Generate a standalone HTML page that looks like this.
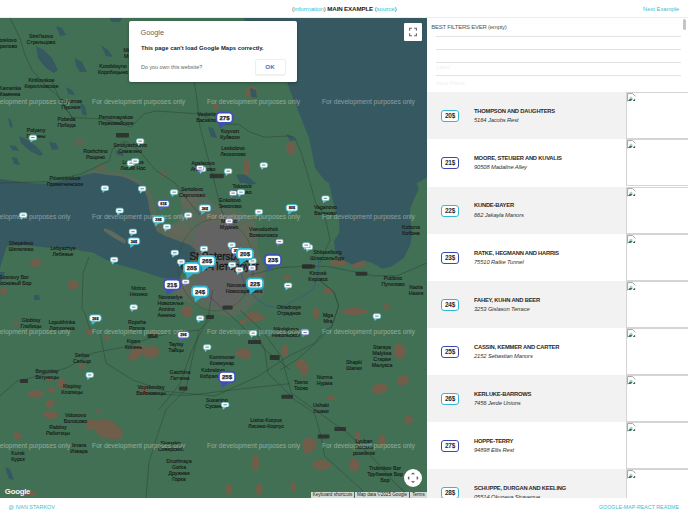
<!DOCTYPE html>
<html><head><meta charset="utf-8"><style>
*{box-sizing:border-box}
html,body{margin:0;padding:0}
body{width:688px;height:512px;overflow:hidden;background:#fff;font-family:"Liberation Sans",sans-serif;position:relative}
.hdr{position:absolute;left:0;top:0;width:688px;height:18px;border-bottom:1px solid #ececec;background:#fff}
.hc{position:absolute;left:292px;top:4.6px;font-size:6.2px;letter-spacing:-0.08px;line-height:8px;white-space:nowrap;color:#333}
.hc b{font-weight:bold;color:#222;letter-spacing:-0.15px}
.lk{color:#2cbfd4}
.par{color:#555}
.nx{position:absolute;left:643px;top:5px;font-size:5.8px;line-height:8px;color:#3bbdd3}
.map{position:absolute;left:0;top:18px;width:427px;height:480px;overflow:hidden;background:#427054}
.map svg{position:absolute;left:0;top:0}
.lb{font-size:5.2px;fill:#161a18;text-anchor:middle;stroke:#161a18;stroke-width:0.12px}
.city{font-size:10px;fill:#1a1a1a;text-anchor:middle;stroke:#1a1a1a;stroke-width:0.35px}
.wm{font-size:6.65px;fill:#ffffff;opacity:0.4}
.mk{font-weight:bold;fill:#222;text-anchor:middle;stroke:#222;stroke-width:0.25px}
.dlg{position:absolute;left:129px;top:2.5px;width:168px;height:61.5px;background:#fff;border-radius:2px;box-shadow:0 1px 3px rgba(0,0,0,.3)}
.dg1{position:absolute;left:11.5px;top:7.3px;font-size:7.3px;color:#5f5f5f}
.dg2{position:absolute;left:12px;top:24.8px;font-size:5.9px;font-weight:bold;color:#222;white-space:nowrap}
.dg3{position:absolute;left:12px;top:43.8px;font-size:5.4px;color:#666;white-space:nowrap}
.ok{position:absolute;left:125.5px;top:38.5px;width:31px;height:16px;border:1px solid #efefef;border-radius:2px;box-shadow:0 0.5px 1px rgba(0,0,0,.06);font-size:6.2px;font-weight:bold;color:#4275c0;text-align:center;line-height:14px}
.fs{position:absolute;left:404px;top:5px;width:18px;height:18px;background:#fff;border-radius:1px}
.glogo{position:absolute;left:4.8px;top:468.9px;font-size:7.9px;font-weight:bold;color:#fff;letter-spacing:-0.3px;text-shadow:0 0 0.6px rgba(0,0,0,.5)}
.attr{position:absolute;top:473.5px;height:6.5px;background:rgba(245,245,245,.8);font-size:4.6px;line-height:6.5px;color:#222;white-space:nowrap;text-align:center}
.cam{position:absolute;left:404px;top:451px;width:18px;height:18px;border-radius:50%;background:#fff}
.pnl{position:absolute;left:427px;top:18px;width:261px;height:480px;overflow:hidden;background:#fff}
.fh{position:absolute;left:4.3px;top:6.2px;font-size:6px;letter-spacing:-0.25px;color:#555;white-space:nowrap}
.ln{position:absolute;left:9px;width:245px;height:1px;background:#e3e3e3}
.ph{position:absolute;left:9px;font-size:5.5px;color:#f0f0f0}
.sb{position:absolute;left:256px;top:1px;width:3px;height:10.5px;border-radius:2px;background:#c4c4c4}
.row{position:absolute;left:0;width:261px;height:47px}
.row.g{background:#f2f2f2}
.row.w{background:#fff}
.badge{position:absolute;left:14px;top:18px;width:18px;height:12px;border:1.8px solid;border-radius:3px;background:#fff;font-size:6.4px;font-weight:bold;color:#2a2a2a;text-align:center;line-height:10.2px;letter-spacing:-0.25px}
.bc{border-color:#33b8d0}
.bi{border-color:#3b4aa8}
.ttl{position:absolute;left:47px;top:15.9px;font-size:5.8px;letter-spacing:-0.22px;font-weight:bold;color:#2a2a2a;white-space:nowrap}
.adr{position:absolute;left:47px;top:25px;font-size:5.8px;font-style:italic;color:#333;letter-spacing:-0.12px;white-space:nowrap}
.img{position:absolute;left:198.6px;top:0px;width:70px;height:47px;border:1px solid #d4d4d4;background:#fff}
.bi1{position:absolute;left:0px;top:0px}
.ftl{position:absolute;left:8.5px;top:503.5px;font-size:5.45px;color:#3bbdd3;white-space:nowrap}
.ftr{position:absolute;left:599px;top:503.5px;font-size:5.3px;color:#3bbdd3;white-space:nowrap}
</style></head><body>
<div class="hdr"><div class="hc"><span class="par">(</span><span class="lk">information</span><span class="par">)</span> <b>MAIN EXAMPLE</b> <span class="par">(</span><span class="lk">source</span><span class="par">)</span></div><div class="nx">Next Example</div></div>
<div class="map">
<svg width="427" height="480" viewBox="0 0 427 480">
<rect x="0" y="0" width="427" height="480" fill="#427054"/>
<path d="M158.5,331.0Q160.4,332.4 159.3,334.5Q158.3,336.5 156.4,338.7Q154.6,340.8 151.5,340.1Q148.5,339.3 145.6,338.6Q142.7,338.0 142.6,335.7Q142.6,333.3 144.7,331.7Q146.9,330.1 149.4,328.6Q152.0,327.0 154.3,328.3Q156.7,329.6 158.5,331.0Z" fill="#705e4b"/>
<path d="M145.0,327.7Q146.3,329.6 145.3,331.9Q144.4,334.3 142.5,336.3Q140.7,338.3 137.8,340.2Q134.9,342.0 131.3,342.6Q127.7,343.1 128.2,340.5Q128.8,337.8 129.7,335.7Q130.6,333.5 133.1,331.0Q135.6,328.6 139.6,327.2Q143.6,325.8 145.0,327.7Z" fill="#705e4b"/>
<path d="M250.1,333.3Q251.4,335.0 250.2,336.8Q248.9,338.7 246.9,340.5Q244.8,342.3 242.4,340.6Q240.0,339.0 237.1,338.2Q234.2,337.4 235.3,335.3Q236.3,333.2 238.0,331.9Q239.8,330.7 242.0,330.5Q244.2,330.2 246.5,330.9Q248.7,331.5 250.1,333.3Z" fill="#705e4b"/>
<path d="M246.7,302.7Q247.7,303.5 246.7,304.3Q245.7,305.1 244.8,305.8Q243.8,306.6 242.4,306.4Q241.0,306.3 240.3,305.4Q239.6,304.5 239.4,303.5Q239.2,302.5 240.4,302.0Q241.5,301.5 242.6,301.3Q243.6,301.2 244.7,301.5Q245.7,301.9 246.7,302.7Z" fill="#705e4b"/>
<path d="M263.7,297.6Q265.8,299.0 264.0,300.6Q262.3,302.2 259.3,302.9Q256.4,303.6 253.0,303.6Q249.5,303.6 247.5,302.2Q245.5,300.7 245.9,299.1Q246.2,297.4 247.6,295.7Q249.0,293.9 252.9,293.7Q256.7,293.5 259.1,294.8Q261.6,296.1 263.7,297.6Z" fill="#705e4b"/>
<path d="M192.7,290.8Q193.2,293.0 192.4,294.9Q191.6,296.9 189.9,298.4Q188.2,300.0 186.0,299.4Q183.7,298.8 182.8,296.8Q182.0,294.8 181.0,292.7Q180.1,290.5 182.3,289.6Q184.6,288.8 186.3,288.1Q188.0,287.3 190.1,288.0Q192.2,288.7 192.7,290.8Z" fill="#705e4b"/>
<path d="M147.7,370.6Q147.7,372.8 147.6,374.7Q147.4,376.6 146.2,377.0Q145.0,377.4 143.7,377.9Q142.4,378.4 141.4,376.7Q140.4,375.1 140.6,372.8Q140.8,370.6 141.5,368.6Q142.2,366.6 143.7,367.0Q145.1,367.3 146.4,367.9Q147.7,368.5 147.7,370.6Z" fill="#705e4b"/>
<path d="M43.3,374.3Q44.0,375.8 43.1,377.1Q42.1,378.5 39.7,379.1Q37.3,379.7 34.4,379.8Q31.5,379.8 29.4,378.6Q27.2,377.4 28.0,375.9Q28.9,374.4 30.4,373.2Q31.8,372.0 34.4,372.3Q37.1,372.6 39.8,372.7Q42.5,372.9 43.3,374.3Z" fill="#705e4b"/>
<path d="M54.6,370.7Q55.6,371.5 55.3,372.7Q55.0,373.9 53.4,374.4Q51.7,374.9 50.3,374.4Q48.9,373.8 47.9,373.1Q46.9,372.5 46.7,371.4Q46.4,370.4 47.8,370.0Q49.2,369.5 50.4,369.1Q51.6,368.6 52.6,369.2Q53.7,369.9 54.6,370.7Z" fill="#705e4b"/>
<path d="M54.4,383.1Q54.6,384.4 54.1,385.4Q53.7,386.4 52.9,387.6Q52.1,388.8 50.9,388.0Q49.7,387.2 48.8,386.4Q48.0,385.5 47.9,384.3Q47.7,383.1 48.3,381.7Q48.9,380.3 50.4,380.8Q51.9,381.2 53.1,381.5Q54.3,381.9 54.4,383.1Z" fill="#705e4b"/>
<path d="M64.5,362.0Q65.7,363.6 66.4,365.4Q67.2,367.3 66.2,368.9Q65.2,370.6 63.5,371.2Q61.7,371.9 60.3,370.6Q58.9,369.3 57.9,368.0Q57.0,366.7 57.3,365.1Q57.5,363.5 58.4,361.9Q59.3,360.3 61.3,360.3Q63.3,360.3 64.5,362.0Z" fill="#705e4b"/>
<path d="M57.0,395.7Q57.4,397.0 56.7,398.2Q56.0,399.3 54.1,400.0Q52.2,400.7 49.9,400.4Q47.6,400.2 45.7,399.3Q43.8,398.5 43.6,397.0Q43.5,395.5 45.5,394.6Q47.6,393.7 49.8,393.8Q52.0,393.8 54.3,394.1Q56.7,394.4 57.0,395.7Z" fill="#705e4b"/>
<path d="M92.3,314.0Q92.3,315.0 92.1,315.9Q91.9,316.7 91.0,317.4Q90.1,318.1 89.0,317.8Q87.9,317.4 87.3,316.7Q86.7,315.9 86.6,315.0Q86.5,314.1 87.2,313.3Q87.9,312.6 88.9,312.8Q89.9,313.0 91.1,313.0Q92.2,313.0 92.3,314.0Z" fill="#705e4b"/>
<path d="M109.2,318.2Q109.9,319.0 109.6,320.1Q109.3,321.3 108.3,321.8Q107.4,322.4 106.5,321.9Q105.6,321.5 105.0,320.7Q104.4,320.0 104.6,319.1Q104.8,318.2 105.1,317.2Q105.4,316.2 106.3,316.5Q107.2,316.7 107.8,317.1Q108.5,317.5 109.2,318.2Z" fill="#705e4b"/>
<path d="M84.3,347.8Q84.8,348.5 84.4,349.3Q84.0,350.1 83.0,350.7Q82.1,351.2 81.1,350.9Q80.0,350.5 79.4,349.9Q78.8,349.3 78.6,348.5Q78.5,347.6 79.2,347.0Q79.9,346.4 81.0,346.1Q82.1,345.7 82.9,346.4Q83.8,347.0 84.3,347.8Z" fill="#705e4b"/>
<path d="M52.6,360.6Q53.0,361.5 52.4,362.2Q51.8,362.9 50.6,363.1Q49.5,363.2 48.5,363.2Q47.5,363.1 46.8,362.7Q46.0,362.2 46.0,361.5Q46.0,360.8 46.8,360.4Q47.6,360.0 48.6,359.5Q49.7,359.0 51.0,359.4Q52.2,359.8 52.6,360.6Z" fill="#705e4b"/>
<path d="M99.2,393.0Q99.6,393.5 99.4,394.2Q99.1,394.9 98.5,395.0Q97.8,395.2 97.2,395.1Q96.6,395.0 96.1,394.6Q95.6,394.2 95.7,393.5Q95.7,392.9 96.0,392.1Q96.3,391.4 97.0,391.5Q97.8,391.7 98.3,392.1Q98.8,392.4 99.2,393.0Z" fill="#705e4b"/>
<path d="M122.5,414.5Q124.0,418.5 119.9,420.2Q115.8,421.9 111.1,421.0Q106.5,420.0 101.8,418.7Q97.1,417.3 96.6,414.1Q96.0,410.9 95.4,407.7Q94.8,404.5 98.2,402.2Q101.7,400.0 107.6,401.7Q113.5,403.4 117.2,407.0Q120.9,410.5 122.5,414.5Z" fill="#705e4b"/>
<path d="M21.8,416.4Q21.8,418.0 21.4,419.3Q21.1,420.6 19.8,421.1Q18.6,421.5 17.1,421.9Q15.6,422.2 14.8,420.8Q13.9,419.5 13.7,417.9Q13.4,416.3 14.7,415.5Q16.0,414.6 17.3,414.5Q18.6,414.4 20.2,414.6Q21.8,414.8 21.8,416.4Z" fill="#705e4b"/>
<path d="M405.1,329.9Q407.0,332.0 406.0,335.2Q405.0,338.4 402.9,340.1Q400.8,341.7 398.4,341.1Q396.1,340.5 394.6,337.9Q393.2,335.3 393.9,332.4Q394.6,329.5 395.6,327.0Q396.5,324.5 398.5,324.4Q400.5,324.2 401.8,326.0Q403.1,327.8 405.1,329.9Z" fill="#705e4b"/>
<path d="M409.0,360.7Q408.4,362.6 408.2,364.0Q407.9,365.4 406.2,366.2Q404.5,366.9 402.2,367.1Q400.0,367.3 398.1,366.0Q396.1,364.7 396.9,362.8Q397.6,360.9 398.6,359.2Q399.6,357.4 402.2,357.0Q404.9,356.6 407.2,357.6Q409.5,358.7 409.0,360.7Z" fill="#705e4b"/>
<path d="M387.2,367.7Q388.5,369.2 387.7,371.0Q386.8,372.9 384.7,374.3Q382.6,375.7 379.9,376.1Q377.2,376.5 375.1,375.8Q373.1,375.0 371.8,373.5Q370.4,372.0 371.8,369.7Q373.1,367.4 376.6,366.1Q380.2,364.8 383.1,365.5Q386.0,366.2 387.2,367.7Z" fill="#705e4b"/>
<path d="M412.7,400.4Q413.6,401.6 413.2,403.2Q412.7,404.7 411.2,404.9Q409.6,405.0 408.1,405.3Q406.7,405.6 405.4,404.5Q404.2,403.4 404.3,401.6Q404.4,399.9 405.5,398.7Q406.6,397.4 408.2,397.4Q409.7,397.4 410.7,398.4Q411.8,399.3 412.7,400.4Z" fill="#705e4b"/>
<path d="M250.3,334.6Q251.4,336.0 250.4,337.5Q249.5,339.0 248.4,340.4Q247.4,341.8 245.6,341.6Q243.9,341.5 243.3,339.6Q242.7,337.7 242.7,336.0Q242.7,334.3 243.3,332.5Q243.9,330.6 245.6,330.5Q247.3,330.4 248.3,331.8Q249.3,333.2 250.3,334.6Z" fill="#705e4b"/>
<path d="M308.8,349.1Q309.1,351.0 308.5,352.7Q308.0,354.4 306.8,356.5Q305.7,358.6 303.5,358.0Q301.3,357.4 300.7,355.1Q300.2,352.8 299.3,350.6Q298.5,348.5 299.8,346.3Q301.1,344.2 303.3,344.2Q305.5,344.2 307.0,345.7Q308.4,347.2 308.8,349.1Z" fill="#705e4b"/>
<path d="M316.5,424.8Q316.9,428.0 315.5,430.3Q314.1,432.5 312.3,433.5Q310.5,434.4 307.8,435.8Q305.0,437.1 303.6,434.1Q302.2,431.1 302.4,428.1Q302.6,425.0 303.8,422.0Q305.1,419.0 307.9,419.4Q310.7,419.8 313.4,420.7Q316.1,421.5 316.5,424.8Z" fill="#705e4b"/>
<path d="M330.1,445.5Q332.7,447.2 330.2,449.0Q327.7,450.7 325.2,451.8Q322.7,452.8 319.7,452.5Q316.7,452.2 314.9,450.7Q313.1,449.1 312.3,447.0Q311.5,444.9 314.2,443.6Q316.8,442.3 319.8,441.7Q322.9,441.1 325.1,442.5Q327.4,443.8 330.1,445.5Z" fill="#705e4b"/>
<path d="M259.3,442.0Q260.1,444.8 259.2,447.3Q258.3,449.8 257.4,451.4Q256.4,453.0 255.1,452.7Q253.9,452.4 252.8,450.3Q251.7,448.2 252.1,445.1Q252.5,442.0 253.0,438.9Q253.6,435.9 255.0,436.1Q256.4,436.4 257.5,437.8Q258.6,439.2 259.3,442.0Z" fill="#705e4b"/>
<path d="M360.3,416.5Q360.5,418.5 359.9,419.9Q359.3,421.2 358.6,422.5Q358.0,423.8 357.1,423.2Q356.2,422.6 355.8,421.3Q355.4,419.9 354.8,418.1Q354.3,416.3 355.3,415.4Q356.2,414.5 357.1,413.8Q358.0,413.1 359.0,413.8Q360.0,414.5 360.3,416.5Z" fill="#705e4b"/>
<path d="M359.2,444.3Q360.2,446.4 359.3,448.5Q358.4,450.6 356.9,452.0Q355.4,453.4 353.4,453.1Q351.5,452.7 349.9,450.9Q348.4,449.1 349.2,446.8Q350.1,444.4 350.8,442.2Q351.5,440.0 353.4,440.1Q355.3,440.2 356.8,441.2Q358.3,442.3 359.2,444.3Z" fill="#705e4b"/>
<path d="M385.2,419.7Q385.9,421.5 385.2,423.3Q384.6,425.1 383.5,426.1Q382.4,427.1 381.1,427.0Q379.8,426.9 378.8,425.3Q377.8,423.8 378.1,421.7Q378.5,419.7 379.2,418.0Q379.9,416.4 381.2,416.2Q382.4,416.0 383.5,417.0Q384.6,417.9 385.2,419.7Z" fill="#705e4b"/>
<path d="M232.0,469.7Q232.7,471.4 232.1,473.1Q231.6,474.9 230.6,476.0Q229.6,477.0 228.5,476.6Q227.3,476.2 226.2,475.0Q225.1,473.7 225.3,471.5Q225.5,469.2 226.2,467.4Q227.0,465.5 228.3,465.0Q229.7,464.6 230.5,466.3Q231.3,468.1 232.0,469.7Z" fill="#705e4b"/>
<path d="M295.3,466.6Q295.9,468.0 295.8,470.3Q295.6,472.5 294.6,473.5Q293.6,474.6 292.7,473.3Q291.8,472.1 291.3,470.9Q290.8,469.6 290.6,467.9Q290.4,466.2 291.2,465.2Q291.9,464.1 292.7,463.6Q293.4,463.2 294.1,464.2Q294.7,465.2 295.3,466.6Z" fill="#705e4b"/>
<path d="M262.5,469.1Q262.7,471.4 262.3,473.4Q262.0,475.5 260.8,476.8Q259.7,478.0 258.6,476.7Q257.6,475.5 256.5,474.5Q255.4,473.5 255.5,471.4Q255.5,469.3 256.6,468.3Q257.6,467.3 258.6,466.0Q259.7,464.7 261.0,465.8Q262.2,466.9 262.5,469.1Z" fill="#705e4b"/>
<path d="M334.5,379.0Q334.7,379.9 334.8,380.9Q335.0,382.0 333.3,382.2Q331.7,382.4 330.3,382.3Q328.9,382.2 327.5,381.6Q326.0,381.0 326.2,379.9Q326.3,378.8 327.8,378.3Q329.2,377.9 330.5,377.6Q331.7,377.3 333.0,377.7Q334.3,378.1 334.5,379.0Z" fill="#705e4b"/>
<path d="M41.2,242.2Q42.2,243.4 41.5,244.8Q40.8,246.3 39.3,247.4Q37.8,248.5 35.4,249.0Q33.1,249.6 32.2,248.1Q31.4,246.6 30.3,245.3Q29.2,244.0 30.6,242.6Q32.0,241.2 34.2,241.0Q36.3,240.8 38.3,240.9Q40.3,240.9 41.2,242.2Z" fill="#705e4b"/>
<path d="M78.1,265.1Q79.4,266.5 78.6,268.3Q77.8,270.1 76.0,270.5Q74.3,270.8 72.2,271.6Q70.1,272.4 68.8,270.6Q67.5,268.7 67.3,266.4Q67.1,264.2 69.2,263.4Q71.3,262.6 72.8,262.1Q74.4,261.6 75.6,262.7Q76.8,263.7 78.1,265.1Z" fill="#705e4b"/>
<path d="M6.6,271.0Q6.9,273.0 6.2,274.5Q5.5,275.9 4.7,276.5Q3.9,277.1 3.0,277.2Q2.1,277.3 1.1,276.2Q0.1,275.1 0.2,273.0Q0.3,271.0 1.2,270.0Q2.2,269.1 3.1,268.9Q3.9,268.8 5.1,268.9Q6.3,269.0 6.6,271.0Z" fill="#705e4b"/>
<path d="M18.3,304.8Q18.6,305.5 18.3,306.3Q18.0,307.0 17.0,307.1Q15.9,307.2 15.1,307.1Q14.3,307.0 13.4,306.6Q12.4,306.3 12.6,305.5Q12.8,304.8 13.6,304.4Q14.3,304.0 15.2,303.5Q16.1,302.9 17.0,303.5Q17.9,304.0 18.3,304.8Z" fill="#705e4b"/>
<path d="M93.5,312.3Q93.9,313.5 92.9,314.3Q91.9,315.0 91.1,316.0Q90.3,317.0 89.1,316.3Q88.0,315.5 86.6,315.1Q85.2,314.7 85.6,313.6Q86.0,312.5 86.8,311.8Q87.7,311.1 89.0,310.8Q90.2,310.5 91.6,310.8Q93.1,311.2 93.5,312.3Z" fill="#705e4b"/>
<path d="M295.7,127.1Q296.3,129.5 295.5,131.6Q294.8,133.8 293.4,135.7Q292.1,137.6 290.2,136.6Q288.4,135.6 287.4,133.7Q286.4,131.8 286.4,129.5Q286.3,127.2 287.5,125.6Q288.7,124.0 290.3,123.3Q291.9,122.7 293.5,123.7Q295.2,124.8 295.7,127.1Z" fill="#705e4b"/>
<path d="M256.5,72.0Q257.6,73.8 257.5,76.3Q257.3,78.9 254.8,79.4Q252.4,80.0 250.0,79.9Q247.7,79.9 246.7,77.8Q245.7,75.8 245.4,73.7Q245.1,71.5 246.8,70.3Q248.5,69.1 250.4,68.4Q252.3,67.6 253.9,69.0Q255.4,70.3 256.5,72.0Z" fill="#705e4b"/>
<path d="M219.0,88.0Q219.5,89.0 219.0,89.9Q218.5,90.9 217.6,91.2Q216.6,91.5 215.6,91.5Q214.7,91.5 213.7,90.9Q212.7,90.2 213.3,89.2Q213.8,88.1 214.1,87.0Q214.4,85.9 215.5,86.0Q216.7,86.1 217.6,86.5Q218.5,87.0 219.0,88.0Z" fill="#705e4b"/>
<path d="M249.5,146.4Q250.0,149.5 249.3,152.2Q248.7,155.0 247.8,156.7Q247.0,158.4 245.9,158.2Q244.9,158.0 243.9,155.6Q243.0,153.3 243.5,150.0Q243.9,146.7 244.3,143.6Q244.8,140.5 245.9,140.1Q247.1,139.8 248.0,141.6Q248.9,143.3 249.5,146.4Z" fill="#705e4b"/>
<path d="M36.0,474.5Q37.8,475.5 36.5,476.6Q35.3,477.8 32.3,478.1Q29.4,478.5 26.6,478.4Q23.8,478.2 22.1,477.4Q20.4,476.5 18.8,475.3Q17.2,474.0 20.4,473.3Q23.5,472.6 26.5,472.4Q29.5,472.3 31.9,472.9Q34.3,473.5 36.0,474.5Z" fill="#705e4b"/>
<path d="M57.7,395.0Q59.4,396.5 58.3,398.3Q57.3,400.1 54.4,400.8Q51.5,401.5 49.0,400.8Q46.4,400.1 44.9,399.0Q43.4,397.9 43.3,396.5Q43.2,395.1 44.6,393.8Q46.1,392.5 48.6,392.6Q51.2,392.6 53.6,393.1Q56.0,393.6 57.7,395.0Z" fill="#705e4b"/>
<path d="M52.9,385.2Q53.7,386.0 53.8,387.3Q53.9,388.7 52.2,389.4Q50.5,390.1 48.8,389.6Q47.1,389.0 46.4,388.0Q45.6,387.0 44.9,385.8Q44.1,384.6 45.7,383.9Q47.4,383.3 48.8,383.1Q50.3,382.9 51.2,383.6Q52.2,384.3 52.9,385.2Z" fill="#705e4b"/>
<path d="M121.4,412.5Q122.6,414.5 121.6,416.5Q120.6,418.6 117.5,419.7Q114.4,420.8 111.1,420.0Q107.9,419.2 105.2,418.0Q102.4,416.7 103.6,414.8Q104.9,412.8 106.3,411.2Q107.8,409.6 110.9,409.5Q114.0,409.4 117.1,410.0Q120.3,410.6 121.4,412.5Z" fill="#705e4b"/>
<path d="M97.6,405.5Q97.3,407.5 96.7,408.9Q96.0,410.2 94.6,411.4Q93.1,412.5 91.0,412.1Q89.0,411.7 87.2,410.6Q85.3,409.5 85.4,407.5Q85.5,405.6 86.8,403.8Q88.2,402.1 90.7,401.9Q93.3,401.6 95.5,402.6Q97.8,403.6 97.6,405.5Z" fill="#705e4b"/>
<path d="M365.6,244.6Q366.8,246.0 365.0,247.3Q363.1,248.5 360.9,249.1Q358.6,249.6 355.5,250.0Q352.4,250.3 351.8,248.7Q351.1,247.2 350.1,245.9Q349.0,244.5 351.0,243.5Q353.1,242.4 355.8,242.7Q358.4,243.0 361.4,243.0Q364.5,243.1 365.6,244.6Z" fill="#705e4b"/>
<path d="M346.8,243.8Q348.2,244.9 346.5,245.9Q344.8,246.9 342.0,247.6Q339.2,248.2 335.8,248.0Q332.3,247.9 331.4,246.8Q330.5,245.7 329.8,244.8Q329.0,243.9 331.0,243.1Q333.0,242.3 336.2,241.9Q339.3,241.5 342.4,242.1Q345.4,242.7 346.8,243.8Z" fill="#705e4b"/>
<path d="M366.0,291.6Q368.9,292.8 366.5,294.2Q364.2,295.5 360.3,296.6Q356.5,297.6 351.6,297.1Q346.7,296.7 343.6,295.5Q340.4,294.3 341.8,293.0Q343.2,291.6 346.0,290.8Q348.8,290.1 352.2,289.8Q355.7,289.5 359.4,289.9Q363.1,290.3 366.0,291.6Z" fill="#705e4b"/>
<path d="M319.0,292.8Q318.9,295.0 319.0,297.2Q319.1,299.5 318.0,300.3Q316.9,301.1 315.9,300.8Q314.8,300.5 314.0,298.8Q313.3,297.2 313.3,295.0Q313.3,292.8 314.1,291.3Q314.9,289.8 315.8,290.2Q316.8,290.5 318.0,290.6Q319.1,290.6 319.0,292.8Z" fill="#705e4b"/>
<path d="M290.6,258.1Q291.5,258.9 290.8,259.9Q290.0,260.9 288.8,261.4Q287.6,262.0 286.1,261.9Q284.6,261.8 284.2,260.8Q283.8,259.8 283.1,258.8Q282.5,257.8 283.8,257.2Q285.0,256.6 286.2,256.6Q287.4,256.6 288.5,256.9Q289.7,257.2 290.6,258.1Z" fill="#705e4b"/>
<path d="M333.1,271.9Q333.7,273.0 332.5,273.8Q331.4,274.6 330.2,275.5Q329.0,276.3 326.9,276.2Q324.8,276.2 324.0,275.1Q323.2,274.0 323.3,273.0Q323.5,272.0 324.5,271.2Q325.5,270.4 327.2,270.1Q329.0,269.8 330.7,270.3Q332.4,270.8 333.1,271.9Z" fill="#705e4b"/>
<path d="M389.0,288.0Q389.7,288.9 389.3,290.1Q389.0,291.3 387.9,291.5Q386.9,291.6 386.1,291.5Q385.3,291.4 384.6,290.7Q384.0,289.9 383.7,288.7Q383.4,287.5 384.3,286.8Q385.1,286.1 386.1,285.7Q387.0,285.2 387.6,286.2Q388.3,287.1 389.0,288.0Z" fill="#705e4b"/>
<path d="M305.6,344.3Q305.7,345.9 305.4,347.4Q305.1,348.9 303.6,350.2Q302.1,351.5 299.9,351.2Q297.7,350.8 296.3,349.3Q294.9,347.8 295.4,346.1Q295.9,344.3 297.0,342.8Q298.0,341.3 300.0,341.1Q302.0,340.9 303.8,341.7Q305.5,342.6 305.6,344.3Z" fill="#705e4b"/>
<path d="M288.2,330.4Q288.0,332.8 288.2,335.1Q288.4,337.4 286.8,337.6Q285.3,337.8 283.8,338.5Q282.2,339.2 281.2,337.2Q280.1,335.2 281.0,333.2Q281.8,331.2 282.3,329.4Q282.7,327.6 284.1,326.8Q285.5,325.9 287.0,326.9Q288.5,328.0 288.2,330.4Z" fill="#705e4b"/>
<ellipse cx="79.7" cy="124.1" rx="5.9" ry="3.9" fill="#705e4b" opacity="0.5"/>
<ellipse cx="100.8" cy="149.8" rx="5.9" ry="4.0" fill="#705e4b" opacity="0.5"/>
<ellipse cx="163.3" cy="155.7" rx="3.9" ry="3.9" fill="#705e4b" opacity="0.5"/>
<polygon points="180.0,174.0 200.0,172.0 215.0,187.0 240.0,192.0 256.0,204.0 258.0,232.0 266.0,252.0 264.0,277.0 245.0,294.0 230.0,300.0 210.0,294.0 196.0,287.0 176.0,280.0 170.0,267.0 185.0,257.0 188.0,240.0 180.0,228.0 165.0,222.0 160.0,210.0 178.0,204.0 182.0,190.0" fill="#6a6660" opacity="0.5"/>
<ellipse cx="217.8" cy="203.3" rx="18.2" ry="8.4" fill="#6f6559" opacity="0.45"/>
<ellipse cx="246.0" cy="218.8" rx="7.2" ry="14.2" fill="#6f6559" opacity="0.45"/>
<ellipse cx="227.0" cy="284.5" rx="12.6" ry="5.9" fill="#6f6559" opacity="0.45"/>
<ellipse cx="252.0" cy="261.0" rx="9.9" ry="12.6" fill="#6f6559" opacity="0.45"/>
<ellipse cx="188.2" cy="240.5" rx="8.3" ry="11.2" fill="#6f6559" opacity="0.45"/>
<ellipse cx="185.0" cy="268.8" rx="11.2" ry="8.3" fill="#6f6559" opacity="0.45"/>
<ellipse cx="189.5" cy="181.5" rx="9.5" ry="8.6" fill="#6f6559" opacity="0.45"/>
<ellipse cx="177.0" cy="215.5" rx="15.3" ry="8.6" fill="#6f6559" opacity="0.45"/>
<polygon points="196.0,210.0 214.0,204.0 236.0,206.0 241.0,217.0 240.0,234.0 244.0,250.0 243.0,272.0 236.0,286.0 222.0,290.0 206.0,284.0 196.0,272.0 198.0,254.0 192.0,238.0 194.0,222.0" fill="#636363"/>
<polygon points="88.0,152.0 120.0,154.0 140.0,162.0 152.0,177.0 158.0,202.0 170.0,214.0 190.0,222.0 200.0,232.0 196.0,240.0 176.0,228.0 160.0,222.0 150.0,210.0 145.0,192.0 138.0,174.0 120.0,164.0 95.0,160.0" fill="#5f6558" opacity="0.7"/>
<polygon points="0.0,161.0 35.0,165.5 47.0,165.5 82.0,157.5 94.0,155.0 108.0,157.0 122.0,158.5 131.0,162.0 143.0,169.0 147.5,180.0 149.5,192.0 153.5,205.0 157.0,213.5 164.0,217.5 176.0,222.0 190.0,227.0 196.0,232.0 194.0,238.0 190.0,244.0 185.0,250.0 180.0,258.0 179.0,262.0 162.5,260.0 150.8,256.2 139.0,252.3 125.4,248.4 111.7,244.5 100.0,238.6 93.0,234.5 82.0,233.0 70.0,230.0 47.0,229.5 23.0,227.0 7.0,228.0 4.0,237.0 0.0,250.0" fill="#365861"/>
<polygon points="104.0,210.0 112.0,213.0 126.0,222.0 125.0,226.0 114.0,220.0 104.0,213.0" fill="#5e6b5e"/>
<polygon points="243.0,0.0 262.0,22.0 280.0,47.0 287.0,64.0 291.7,76.6 297.6,91.3 303.4,106.0 309.3,120.6 312.2,135.2 315.0,150.0 324.0,161.6 329.0,165.0 331.8,177.8 335.0,190.7 339.3,203.6 339.3,214.3 334.0,223.0 335.0,233.6 343.6,242.2 352.2,246.5 363.0,242.2 371.6,244.4 382.3,250.8 391.0,248.7 403.8,240.0 410.2,227.2 412.4,214.3 410.2,201.4 410.2,190.7 414.5,180.0 418.8,171.3 416.7,164.9 425.3,160.6 427.0,160.0 427.0,0.0" fill="#365861"/>
<polygon points="36.0,28.0 44.0,32.0 52.0,40.0 58.0,52.0 54.0,55.0 46.0,50.0 38.0,40.0" fill="#365861"/>
<polygon points="75.0,40.0 82.0,44.0 87.0,54.0 80.0,54.0 76.0,48.0" fill="#365861"/>
<polygon points="56.0,8.0 62.0,10.0 66.0,17.0 60.0,18.0" fill="#365861"/>
<polygon points="101.0,27.0 108.0,32.0 113.0,39.0 106.0,38.0" fill="#365861"/>
<polygon points="66.0,69.0 72.0,72.0 75.0,77.0 68.0,76.0" fill="#365861"/>
<polygon points="80.0,84.0 85.0,88.0 87.0,98.0 82.0,96.0" fill="#365861"/>
<polygon points="109.0,0.0 122.0,0.0 120.0,4.0 112.0,4.0" fill="#365861"/>
<polygon points="236.0,157.0 244.0,158.0 249.0,165.0 240.0,165.0" fill="#365861"/>
<polygon points="286.0,116.0 292.0,118.0 296.0,122.0 290.0,123.0" fill="#365861"/>
<polygon points="5.0,254.0 0.0,267.0 0.0,254.0" fill="#365861"/>
<polygon points="19.0,118.0 26.0,121.0 36.0,128.0 43.0,136.0 40.0,138.0 30.0,133.0 21.0,125.0" fill="#365861"/>
<polygon points="49.0,124.0 56.0,125.0 58.6,131.0 52.0,132.0" fill="#365861"/>
<polygon points="9.4,127.0 16.0,128.0 18.8,133.0 12.0,132.0" fill="#365861"/>
<polygon points="11.7,139.0 17.0,140.0 20.0,147.0 14.0,146.0" fill="#365861"/>
<polygon points="8.0,100.0 11.0,102.0 13.0,110.0 10.0,109.0" fill="#365861"/>
<polygon points="115.0,133.0 122.0,133.0 124.0,138.0 117.0,137.0" fill="#365861"/>
<polygon points="250.0,70.0 256.0,72.0 257.0,80.0 251.0,79.0" fill="#365861"/>
<polygon points="208.0,109.0 213.0,110.0 217.0,120.0 211.0,119.0" fill="#365861"/>
<polygon points="237.0,156.0 246.0,157.0 257.0,166.0 248.0,167.0" fill="#365861"/>
<polygon points="5.0,449.0 10.0,451.0 14.0,462.0 9.0,461.0" fill="#365861"/>
<polygon points="34.0,277.0 39.0,277.0 40.0,282.0 34.0,282.0" fill="#365861"/>
<ellipse cx="216" cy="247" rx="38" ry="46" fill="none" stroke="#2e4a3a" stroke-width="0.7" opacity="0.6"/>
<polyline points="51.5,62.0 60.0,82.0 72.0,99.5 103.0,101.0 131.0,109.0 143.8,96.0 156.0,93.0 200.0,96.0 221.5,106.3 238.6,106.3 249.4,113.8 264.4,119.2 288.0,118.0 294.5,119.2 301.0,134.0 307.4,155.7 311.7,170.7 316.0,185.7 324.5,196.5 330.0,222.0 320.0,244.0" fill="none" stroke="#2c4436" stroke-width="0.8" opacity="0.65"/>
<polyline points="0.0,165.0 47.0,163.6 81.0,156.0 109.0,143.0 112.5,131.0 125.0,123.0 137.5,131.0 156.0,152.6 175.0,165.0 187.5,182.0 200.0,197.0" fill="none" stroke="#2c4436" stroke-width="0.8" opacity="0.65"/>
<polyline points="194.0,62.0 197.0,82.0 200.0,109.0 206.4,134.0 213.0,158.0 217.0,175.0 221.5,192.0 228.0,207.0" fill="none" stroke="#2c4436" stroke-width="0.8" opacity="0.65"/>
<polyline points="10.0,0.0 20.0,20.0 25.0,37.0 32.0,52.0 45.0,67.0 59.0,79.0 72.0,99.5" fill="none" stroke="#2c4436" stroke-width="0.8" opacity="0.65"/>
<polyline points="199.0,312.0 192.0,342.0 185.8,371.7 166.0,391.6 156.0,421.5 149.0,444.7 146.0,480.0" fill="none" stroke="#2c4436" stroke-width="0.8" opacity="0.65"/>
<polyline points="0.0,378.0 16.6,363.4 36.5,358.4 66.4,350.0 93.0,335.0 126.0,328.6 149.0,320.3 169.0,315.3 199.0,312.0 212.0,300.0" fill="none" stroke="#2c4436" stroke-width="0.8" opacity="0.65"/>
<polyline points="99.5,312.0 106.0,345.0 132.7,362.0 166.0,373.4 215.0,378.0 258.0,358.4 288.0,338.5 314.5,325.3 324.5,312.0 331.6,309.0 338.6,288.0 334.0,274.0 320.0,262.5" fill="none" stroke="#2c4436" stroke-width="0.8" opacity="0.65"/>
<polyline points="254.8,312.0 264.8,332.0 268.0,355.0 294.6,381.7 314.5,395.0 321.0,418.0 324.5,438.0 361.0,471.0 367.6,480.0" fill="none" stroke="#2c4436" stroke-width="0.8" opacity="0.65"/>
<polyline points="240.0,292.0 261.5,312.0 281.4,338.5 291.3,375.0 314.5,391.6 347.7,415.0 374.0,441.0 397.5,468.0 414.0,480.0" fill="none" stroke="#2c4436" stroke-width="0.8" opacity="0.65"/>
<polyline points="250.0,257.0 280.0,249.6 303.4,248.4 327.0,248.4 345.6,252.0 373.7,257.8 397.0,257.8 427.0,245.0" fill="none" stroke="#2c4436" stroke-width="0.8" opacity="0.65"/>
<polyline points="320.0,262.5 334.0,274.0 338.6,288.0 331.6,309.0 315.0,325.7 296.4,342.0 280.0,352.0" fill="none" stroke="#2c4436" stroke-width="0.8" opacity="0.65"/>
<polyline points="212.6,272.0 208.0,300.0 191.6,333.0 180.0,365.7 158.7,392.0" fill="none" stroke="#2c4436" stroke-width="0.8" opacity="0.65"/>
<polyline points="210.0,279.0 240.8,307.0 266.5,333.0 290.0,351.7" fill="none" stroke="#2c4436" stroke-width="0.8" opacity="0.65"/>
<polyline points="140.0,375.0 187.0,377.5 245.5,370.4 290.0,365.7" fill="none" stroke="#2c4436" stroke-width="0.8" opacity="0.65"/>
<polyline points="89.0,239.0 83.0,255.0 82.0,290.0 85.5,297.0 90.0,312.0" fill="none" stroke="#2c4436" stroke-width="0.8" opacity="0.65"/>
<polyline points="319.0,241.0 318.0,256.0 313.4,271.0 302.0,278.7 290.7,284.4 279.4,290.0 266.0,288.0 256.7,280.6 245.4,269.2 241.6,256.0 240.6,246.6 234.0,241.0 222.0,238.0 205.0,240.0 195.0,240.0" fill="none" stroke="#3a6470" stroke-width="1.5" opacity="0.9"/>
<text x="6.0" y="23.8" class="lb">Gorelovo</text>
<text x="6.0" y="29.8" class="lb">Горелово</text>
<text x="140.0" y="33.8" class="lb">Michurinskoye</text>
<text x="140.0" y="39.8" class="lb">Мичуринское</text>
<text x="41.0" y="20.3" class="lb">Strel'tsovo</text>
<text x="41.0" y="26.3" class="lb">Стрельцово</text>
<text x="41.5" y="64.3" class="lb">Kirillovskoe</text>
<text x="41.5" y="70.3" class="lb">Кирилловское</text>
<text x="10.0" y="71.8" class="lb">Kamenka</text>
<text x="10.0" y="77.8" class="lb">Каменка</text>
<text x="113.0" y="49.8" class="lb">Korobitsyno</text>
<text x="113.0" y="55.8" class="lb">Коробицыно</text>
<text x="71.0" y="84.8" class="lb">Ozyornoe</text>
<text x="71.0" y="90.8" class="lb">Пушное</text>
<text x="66.5" y="102.8" class="lb">Pobeda</text>
<text x="66.5" y="108.8" class="lb">Победа</text>
<text x="116.0" y="101.3" class="lb">Pervomayskoe</text>
<text x="116.0" y="107.3" class="lb">Первомайское</text>
<text x="36.0" y="113.8" class="lb">Polyany</text>
<text x="36.0" y="119.8" class="lb">Поляны</text>
<text x="95.5" y="134.8" class="lb">Roshchino</text>
<text x="95.5" y="140.8" class="lb">Рощино</text>
<text x="65.0" y="161.8" class="lb">Privetninskoe</text>
<text x="65.0" y="167.8" class="lb">Приветнинское</text>
<text x="130.0" y="128.8" class="lb">Smolyachkovo</text>
<text x="130.0" y="134.8" class="lb">Симагино</text>
<text x="133.0" y="146.3" class="lb">Lisiy Nos</text>
<text x="133.0" y="152.3" class="lb">Лисий Нос</text>
<text x="203.0" y="146.8" class="lb">Agalatovo</text>
<text x="203.0" y="152.8" class="lb">Агалатово</text>
<text x="192.0" y="173.3" class="lb">Sertolovo</text>
<text x="192.0" y="179.3" class="lb">Сертолово</text>
<text x="21.0" y="226.8" class="lb">Shepelevo</text>
<text x="21.0" y="232.8" class="lb">Шепелево</text>
<text x="63.0" y="232.3" class="lb">Lebyazhye</text>
<text x="63.0" y="238.3" class="lb">Лебяжье</text>
<text x="14.0" y="261.3" class="lb">Sosnovy Bor</text>
<text x="14.0" y="267.3" class="lb">Сосновый Бор</text>
<text x="31.0" y="303.8" class="lb">Globitsy</text>
<text x="31.0" y="309.8" class="lb">Глобицы</text>
<text x="62.0" y="306.3" class="lb">Lopukhinka</text>
<text x="62.0" y="312.3" class="lb">Лопухинка</text>
<text x="209.0" y="97.8" class="lb">Vaskelovo</text>
<text x="209.0" y="103.8" class="lb">Васкелово</text>
<text x="230.0" y="114.8" class="lb">Kuyvozi</text>
<text x="230.0" y="120.8" class="lb">Куйвози</text>
<text x="233.0" y="131.8" class="lb">Leskolovo</text>
<text x="233.0" y="137.8" class="lb">Лесколово</text>
<text x="242.0" y="169.8" class="lb">Toksovo</text>
<text x="242.0" y="175.8" class="lb">Токсово</text>
<text x="230.0" y="183.8" class="lb">Enkolovo</text>
<text x="230.0" y="189.8" class="lb">Энколово</text>
<text x="229.0" y="204.8" class="lb">Murino</text>
<text x="229.0" y="210.8" class="lb">Мурино</text>
<text x="263.5" y="213.3" class="lb">Vsevolozhsk</text>
<text x="263.5" y="219.3" class="lb">Всеволожск</text>
<text x="325.5" y="190.8" class="lb">Vaganovo</text>
<text x="325.5" y="196.8" class="lb">Ваганово</text>
<text x="327.5" y="235.8" class="lb">Shlisselburg</text>
<text x="327.5" y="242.3" class="lb">Шлиссельбург</text>
<text x="411.0" y="211.3" class="lb">Kobona</text>
<text x="411.0" y="217.3" class="lb">Кобона</text>
<text x="318.0" y="256.8" class="lb">Kirovsk</text>
<text x="318.0" y="262.8" class="lb">Кировск</text>
<text x="393.0" y="262.3" class="lb">Putilovo</text>
<text x="393.0" y="268.3" class="lb">Путилово</text>
<text x="416.0" y="271.3" class="lb">Nazia</text>
<text x="416.0" y="277.3" class="lb">Назия</text>
<text x="138.5" y="272.3" class="lb">Nizino</text>
<text x="138.5" y="278.3" class="lb">Низино</text>
<text x="137.0" y="305.8" class="lb">Ropsha</text>
<text x="137.0" y="311.8" class="lb">Ропша</text>
<text x="213.0" y="354.3" class="lb">Kobralovo</text>
<text x="213.0" y="360.3" class="lb">Кобралово</text>
<text x="216.8" y="383.8" class="lb">Susanino</text>
<text x="216.8" y="389.8" class="lb">Сусанино</text>
<text x="170.5" y="281.3" class="lb">Novoselye</text>
<text x="170.5" y="287.3" class="lb">Новоселье</text>
<text x="166.5" y="292.8" class="lb">Annino</text>
<text x="166.5" y="298.8" class="lb">Аннино</text>
<text x="244.0" y="269.3" class="lb">Novosaratovka</text>
<text x="244.0" y="275.3" class="lb">Новосаратовка</text>
<text x="289.0" y="291.3" class="lb">Otradnoye</text>
<text x="289.0" y="297.3" class="lb">Отрадное</text>
<text x="328.0" y="298.8" class="lb">Mga</text>
<text x="328.0" y="304.8" class="lb">Мга</text>
<text x="286.0" y="313.3" class="lb">Nikolskoye</text>
<text x="286.0" y="319.3" class="lb">Никольское</text>
<text x="133.5" y="324.8" class="lb">Kipen</text>
<text x="133.5" y="330.8" class="lb">Кипень</text>
<text x="176.0" y="327.8" class="lb">Taytsy</text>
<text x="176.0" y="333.8" class="lb">Тайцы</text>
<text x="82.0" y="339.3" class="lb">Seltso</text>
<text x="82.0" y="345.3" class="lb">Сельцо</text>
<text x="47.0" y="354.8" class="lb">Begunitsy</text>
<text x="47.0" y="360.8" class="lb">Бегуницы</text>
<text x="72.0" y="369.8" class="lb">Klopitsy</text>
<text x="72.0" y="375.8" class="lb">Клопицы</text>
<text x="180.0" y="356.3" class="lb">Gatchina</text>
<text x="180.0" y="362.3" class="lb">Гатчина</text>
<text x="151.0" y="370.8" class="lb">Voyskovitsy</text>
<text x="151.0" y="376.8" class="lb">Войсковицы</text>
<text x="75.5" y="399.3" class="lb">Volosovo</text>
<text x="75.5" y="405.3" class="lb">Волосово</text>
<text x="58.0" y="410.8" class="lb">Rabitsy</text>
<text x="58.0" y="416.8" class="lb">Рабитицы</text>
<text x="79.0" y="428.8" class="lb">Izvara</text>
<text x="79.0" y="434.8" class="lb">Извара</text>
<text x="18.0" y="437.3" class="lb">Kursk</text>
<text x="18.0" y="443.3" class="lb">Курск</text>
<text x="171.0" y="427.3" class="lb">Siverskiy</text>
<text x="171.0" y="433.3" class="lb">Сиверский</text>
<text x="179.0" y="445.3" class="lb">Druzhnaya</text>
<text x="179.0" y="450.8" class="lb">Gorka</text>
<text x="179.0" y="456.8" class="lb">Дружная</text>
<text x="179.0" y="462.8" class="lb">Горка</text>
<text x="222.0" y="341.3" class="lb">Kommunar</text>
<text x="222.0" y="347.3" class="lb">Коммунар</text>
<text x="301.0" y="365.8" class="lb">Tosno</text>
<text x="301.0" y="371.8" class="lb">Тосно</text>
<text x="324.5" y="360.8" class="lb">Nurma</text>
<text x="324.5" y="366.8" class="lb">Нурма</text>
<text x="354.0" y="346.3" class="lb">Shapki</text>
<text x="354.0" y="352.3" class="lb">Шапки</text>
<text x="382.0" y="330.8" class="lb">Staraya</text>
<text x="382.0" y="336.8" class="lb">Malyksa</text>
<text x="382.0" y="342.8" class="lb">Старая</text>
<text x="382.0" y="348.8" class="lb">Малукса</text>
<text x="321.0" y="389.3" class="lb">Ushaki</text>
<text x="321.0" y="395.3" class="lb">Ушаки</text>
<text x="266.0" y="403.8" class="lb">Lisino-Korpus</text>
<text x="266.0" y="409.8" class="lb">Лисино-Корпус</text>
<text x="364.0" y="425.3" class="lb">Lyuban</text>
<text x="364.0" y="431.3" class="lb">Любань</text>
<text x="364.0" y="437.3" class="lb">poselenie</text>
<text x="385.0" y="452.3" class="lb">Trubnikov Bor</text>
<text x="385.0" y="458.3" class="lb">Трубников Бор</text>
<text x="385.0" y="464.3" class="lb">Бор</text>
<text x="220" y="242.0" class="city">St Petersburg</text>
<text x="220" y="251.5" class="city">Санкт-Петербург</text>
<rect x="116" y="115" width="13" height="4.5" rx="0.8" fill="#2b2b2b" opacity="0.85"/>
<rect x="209.7" y="155.7" width="14" height="4.5" rx="0.8" fill="#2b2b2b" opacity="0.85"/>
<rect x="222.6" y="287.5" width="10" height="4" rx="0.8" fill="#2b2b2b" opacity="0.85"/>
<rect x="206" y="297" width="8" height="4" rx="0.8" fill="#2b2b2b" opacity="0.85"/>
<rect x="302" y="246.5" width="13" height="4" rx="0.8" fill="#2b2b2b" opacity="0.85"/>
<rect x="355.6" y="253.8" width="11.7" height="4" rx="0.8" fill="#2b2b2b" opacity="0.85"/>
<rect x="147.6" y="316" width="10" height="4" rx="0.8" fill="#2b2b2b" opacity="0.85"/>
<rect x="179" y="368.4" width="8.5" height="4" rx="0.8" fill="#2b2b2b" opacity="0.85"/>
<rect x="20" y="361" width="8" height="4" rx="0.8" fill="#2b2b2b" opacity="0.85"/>
<rect x="248" y="322" width="13" height="4" rx="0.8" fill="#2b2b2b" opacity="0.85"/>
<rect x="269.7" y="337" width="10" height="5" rx="0.8" fill="#2b2b2b" opacity="0.85"/>
<rect x="281.4" y="376.7" width="11.6" height="4" rx="0.8" fill="#2b2b2b" opacity="0.85"/>
<rect x="334.4" y="409" width="11.6" height="4" rx="0.8" fill="#2b2b2b" opacity="0.85"/>
<rect x="317.8" y="416.5" width="11.7" height="4" rx="0.8" fill="#2b2b2b" opacity="0.85"/>
<rect x="302" y="246.5" width="10" height="4" rx="0.8" fill="#2b2b2b" opacity="0.85"/>
<text x="-22.8" y="86.0" class="wm">For development purposes only</text>
<text x="92.1" y="86.0" class="wm">For development purposes only</text>
<text x="207" y="86.0" class="wm">For development purposes only</text>
<text x="321.9" y="86.0" class="wm">For development purposes only</text>
<text x="-22.8" y="201.0" class="wm">For development purposes only</text>
<text x="92.1" y="201.0" class="wm">For development purposes only</text>
<text x="207" y="201.0" class="wm">For development purposes only</text>
<text x="321.9" y="201.0" class="wm">For development purposes only</text>
<text x="-22.8" y="315.5" class="wm">For development purposes only</text>
<text x="92.1" y="315.5" class="wm">For development purposes only</text>
<text x="207" y="315.5" class="wm">For development purposes only</text>
<text x="321.9" y="315.5" class="wm">For development purposes only</text>
<text x="-22.8" y="430.0" class="wm">For development purposes only</text>
<text x="92.1" y="430.0" class="wm">For development purposes only</text>
<text x="207" y="430.0" class="wm">For development purposes only</text>
<text x="321.9" y="430.0" class="wm">For development purposes only</text>
<polygon points="30.4,121.7 34.0,121.7 30.8,124.5" fill="#6fcbdc"/><rect x="29.3" y="117.2" width="7.3" height="4.7" rx="1.5" fill="#fff" stroke="#6fcbdc" stroke-width="0.7"/><rect x="31.2" y="119.0" width="3.5" height="1.1" fill="#888"/>
<polygon points="204.6,331.3 208.2,331.3 205.0,334.1" fill="#6fcbdc"/><rect x="203.5" y="326.8" width="7.3" height="4.7" rx="1.5" fill="#fff" stroke="#6fcbdc" stroke-width="0.7"/><rect x="205.4" y="328.6" width="3.5" height="1.1" fill="#888"/>
<polygon points="306.3,231.3 309.9,231.3 306.7,234.1" fill="#6fcbdc"/><rect x="305.2" y="226.8" width="7.3" height="4.7" rx="1.5" fill="#fff" stroke="#6fcbdc" stroke-width="0.7"/><rect x="307.1" y="228.6" width="3.5" height="1.1" fill="#888"/>
<polygon points="285.4,269.6 289.0,269.6 285.8,272.4" fill="#6fcbdc"/><rect x="284.4" y="265.1" width="7.3" height="4.7" rx="1.5" fill="#fff" stroke="#6fcbdc" stroke-width="0.7"/><rect x="286.2" y="266.9" width="3.5" height="1.1" fill="#888"/>
<polygon points="229.1,229.1 232.7,229.1 229.5,231.9" fill="#6fcbdc"/><rect x="228.0" y="224.6" width="7.3" height="4.7" rx="1.5" fill="#fff" stroke="#6fcbdc" stroke-width="0.7"/><rect x="229.9" y="226.4" width="3.5" height="1.1" fill="#888"/>
<polygon points="249.9,245.1 253.5,245.1 250.3,247.9" fill="#6fcbdc"/><rect x="248.8" y="240.5" width="7.3" height="4.7" rx="1.5" fill="#fff" stroke="#6fcbdc" stroke-width="0.7"/><rect x="250.7" y="242.4" width="3.5" height="1.1" fill="#888"/>
<polygon points="229.6,248.9 233.2,248.9 230.0,251.7" fill="#6fcbdc"/><rect x="228.5" y="244.3" width="7.3" height="4.7" rx="1.5" fill="#fff" stroke="#6fcbdc" stroke-width="0.7"/><rect x="230.4" y="246.2" width="3.5" height="1.1" fill="#888"/>
<polygon points="236.8,254.0 240.4,254.0 237.2,256.8" fill="#6fcbdc"/><rect x="235.7" y="249.4" width="7.3" height="4.7" rx="1.5" fill="#fff" stroke="#6fcbdc" stroke-width="0.7"/><rect x="237.6" y="251.3" width="3.5" height="1.1" fill="#888"/>
<polygon points="249.5,252.1 253.1,252.1 249.9,254.9" fill="#6a78c8"/><rect x="248.4" y="247.5" width="7.3" height="4.7" rx="1.5" fill="#fff" stroke="#6a78c8" stroke-width="0.7"/><rect x="250.3" y="249.4" width="3.5" height="1.1" fill="#888"/>
<polygon points="201.4,232.8 205.0,232.8 201.8,235.6" fill="#6fcbdc"/><rect x="200.3" y="228.2" width="7.3" height="4.7" rx="1.5" fill="#fff" stroke="#6fcbdc" stroke-width="0.7"/><rect x="202.2" y="230.1" width="3.5" height="1.1" fill="#888"/>
<polygon points="276.9,225.7 280.5,225.7 277.3,228.5" fill="#6a78c8"/><rect x="275.9" y="221.2" width="7.3" height="4.7" rx="1.5" fill="#fff" stroke="#6a78c8" stroke-width="0.7"/><rect x="277.7" y="223.0" width="3.5" height="1.1" fill="#888"/>
<polygon points="20.6,199.3 24.2,199.3 21.0,202.1" fill="#6fcbdc"/><rect x="19.6" y="194.8" width="7.3" height="4.7" rx="1.5" fill="#fff" stroke="#6fcbdc" stroke-width="0.7"/><rect x="21.4" y="196.6" width="3.5" height="1.1" fill="#888"/>
<polygon points="102.3,172.3 105.9,172.3 102.7,175.1" fill="#6fcbdc"/><rect x="101.2" y="167.8" width="7.3" height="4.7" rx="1.5" fill="#fff" stroke="#6fcbdc" stroke-width="0.7"/><rect x="103.1" y="169.6" width="3.5" height="1.1" fill="#888"/>
<polygon points="139.6,172.9 143.2,172.9 140.0,175.7" fill="#6fcbdc"/><rect x="138.5" y="168.3" width="7.3" height="4.7" rx="1.5" fill="#fff" stroke="#6fcbdc" stroke-width="0.7"/><rect x="140.4" y="170.2" width="3.5" height="1.1" fill="#888"/>
<polygon points="117.0,194.7 120.6,194.7 117.4,197.5" fill="#6fcbdc"/><rect x="116.0" y="190.2" width="7.3" height="4.7" rx="1.5" fill="#fff" stroke="#6fcbdc" stroke-width="0.7"/><rect x="117.8" y="192.0" width="3.5" height="1.1" fill="#888"/>
<polygon points="159.6,188.7 163.2,188.7 160.0,191.5" fill="#6a78c8"/><rect x="158.5" y="184.2" width="7.3" height="4.7" rx="1.5" fill="#fff" stroke="#6a78c8" stroke-width="0.7"/><rect x="160.4" y="186.0" width="3.5" height="1.1" fill="#888"/>
<polygon points="164.4,210.9 168.0,210.9 164.8,213.7" fill="#6fcbdc"/><rect x="163.3" y="206.3" width="7.3" height="4.7" rx="1.5" fill="#fff" stroke="#6fcbdc" stroke-width="0.7"/><rect x="165.2" y="208.2" width="3.5" height="1.1" fill="#888"/>
<polygon points="130.4,215.8 134.0,215.8 130.8,218.6" fill="#6fcbdc"/><rect x="129.3" y="211.2" width="7.3" height="4.7" rx="1.5" fill="#fff" stroke="#6fcbdc" stroke-width="0.7"/><rect x="131.2" y="213.1" width="3.5" height="1.1" fill="#888"/>
<polygon points="171.5,176.3 175.1,176.3 171.9,179.1" fill="#6fcbdc"/><rect x="170.4" y="171.8" width="7.3" height="4.7" rx="1.5" fill="#fff" stroke="#6fcbdc" stroke-width="0.7"/><rect x="172.3" y="173.6" width="3.5" height="1.1" fill="#888"/>
<polygon points="199.6,153.3 203.2,153.3 200.0,156.1" fill="#6fcbdc"/><rect x="198.5" y="148.8" width="7.3" height="4.7" rx="1.5" fill="#fff" stroke="#6fcbdc" stroke-width="0.7"/><rect x="200.4" y="150.6" width="3.5" height="1.1" fill="#888"/>
<polygon points="185.6,199.3 189.2,199.3 186.0,202.1" fill="#6fcbdc"/><rect x="184.5" y="194.8" width="7.3" height="4.7" rx="1.5" fill="#fff" stroke="#6fcbdc" stroke-width="0.7"/><rect x="186.4" y="196.6" width="3.5" height="1.1" fill="#888"/>
<polygon points="111.6,243.9 115.2,243.9 112.0,246.7" fill="#6fcbdc"/><rect x="110.5" y="239.3" width="7.3" height="4.7" rx="1.5" fill="#fff" stroke="#6fcbdc" stroke-width="0.7"/><rect x="112.4" y="241.2" width="3.5" height="1.1" fill="#888"/>
<polygon points="172.2,236.9 175.8,236.9 172.6,239.7" fill="#6fcbdc"/><rect x="171.1" y="232.3" width="7.3" height="4.7" rx="1.5" fill="#fff" stroke="#6fcbdc" stroke-width="0.7"/><rect x="173.0" y="234.2" width="3.5" height="1.1" fill="#888"/>
<polygon points="178.6,246.0 182.2,246.0 179.0,248.8" fill="#6fcbdc"/><rect x="177.5" y="241.4" width="7.3" height="4.7" rx="1.5" fill="#fff" stroke="#6fcbdc" stroke-width="0.7"/><rect x="179.4" y="243.3" width="3.5" height="1.1" fill="#888"/>
<polygon points="183.1,266.0 186.7,266.0 183.5,268.8" fill="#6a78c8"/><rect x="182.0" y="261.4" width="7.3" height="4.7" rx="1.5" fill="#fff" stroke="#6a78c8" stroke-width="0.7"/><rect x="183.9" y="263.3" width="3.5" height="1.1" fill="#888"/>
<polygon points="131.1,291.3 134.7,291.3 131.5,294.1" fill="#6fcbdc"/><rect x="130.0" y="286.8" width="7.3" height="4.7" rx="1.5" fill="#fff" stroke="#6fcbdc" stroke-width="0.7"/><rect x="131.9" y="288.6" width="3.5" height="1.1" fill="#888"/>
<polygon points="197.6,302.3 201.2,302.3 198.0,305.1" fill="#6fcbdc"/><rect x="196.5" y="297.8" width="7.3" height="4.7" rx="1.5" fill="#fff" stroke="#6fcbdc" stroke-width="0.7"/><rect x="198.4" y="299.6" width="3.5" height="1.1" fill="#888"/>
<polygon points="128.3,147.3 131.9,147.3 128.7,150.1" fill="#6fcbdc"/><rect x="127.2" y="142.8" width="7.3" height="4.7" rx="1.5" fill="#fff" stroke="#6fcbdc" stroke-width="0.7"/><rect x="129.1" y="144.6" width="3.5" height="1.1" fill="#888"/>
<polygon points="132.6,145.3 136.2,145.3 133.0,148.1" fill="#6fcbdc"/><rect x="131.5" y="140.8" width="7.3" height="4.7" rx="1.5" fill="#fff" stroke="#6fcbdc" stroke-width="0.7"/><rect x="133.4" y="142.6" width="3.5" height="1.1" fill="#888"/>
<polygon points="87.2,359.1 90.8,359.1 87.6,361.9" fill="#6fcbdc"/><rect x="86.1" y="354.6" width="7.3" height="4.7" rx="1.5" fill="#fff" stroke="#6fcbdc" stroke-width="0.7"/><rect x="88.0" y="356.4" width="3.5" height="1.1" fill="#888"/>
<polygon points="250.6,317.3 254.2,317.3 251.0,320.1" fill="#6fcbdc"/><rect x="249.5" y="312.8" width="7.3" height="4.7" rx="1.5" fill="#fff" stroke="#6fcbdc" stroke-width="0.7"/><rect x="251.4" y="314.6" width="3.5" height="1.1" fill="#888"/>
<polygon points="302.2,316.0 305.8,316.0 302.6,318.8" fill="#6fcbdc"/><rect x="301.2" y="311.4" width="7.3" height="4.7" rx="1.5" fill="#fff" stroke="#6fcbdc" stroke-width="0.7"/><rect x="303.0" y="313.3" width="3.5" height="1.1" fill="#888"/>
<polygon points="222.6,388.9 226.2,388.9 223.0,391.7" fill="#6fcbdc"/><rect x="221.5" y="384.4" width="7.3" height="4.7" rx="1.5" fill="#fff" stroke="#6fcbdc" stroke-width="0.7"/><rect x="223.4" y="386.2" width="3.5" height="1.1" fill="#888"/>
<polygon points="374.3,300.3 377.9,300.3 374.7,303.1" fill="#6fcbdc"/><rect x="373.2" y="295.8" width="7.3" height="4.7" rx="1.5" fill="#fff" stroke="#6fcbdc" stroke-width="0.7"/><rect x="375.1" y="297.6" width="3.5" height="1.1" fill="#888"/>
<polygon points="302.6,316.7 306.2,316.7 303.0,319.5" fill="#6a78c8"/><rect x="301.6" y="312.1" width="7.3" height="4.7" rx="1.5" fill="#fff" stroke="#6a78c8" stroke-width="0.7"/><rect x="303.4" y="314.0" width="3.5" height="1.1" fill="#888"/>
<polygon points="303.6,229.3 307.2,229.3 304.0,232.1" fill="#6fcbdc"/><rect x="302.6" y="224.8" width="7.3" height="4.7" rx="1.5" fill="#fff" stroke="#6fcbdc" stroke-width="0.7"/><rect x="304.4" y="226.6" width="3.5" height="1.1" fill="#888"/>
<polygon points="225.6,155.3 229.2,155.3 226.0,158.1" fill="#6fcbdc"/><rect x="224.5" y="150.8" width="7.3" height="4.7" rx="1.5" fill="#fff" stroke="#6fcbdc" stroke-width="0.7"/><rect x="226.4" y="152.6" width="3.5" height="1.1" fill="#888"/>
<polygon points="261.1,149.3 264.7,149.3 261.5,152.1" fill="#6fcbdc"/><rect x="260.1" y="144.8" width="7.3" height="4.7" rx="1.5" fill="#fff" stroke="#6fcbdc" stroke-width="0.7"/><rect x="261.9" y="146.6" width="3.5" height="1.1" fill="#888"/>
<polygon points="197.6,152.0 201.2,152.0 198.0,154.8" fill="#6a78c8"/><rect x="196.5" y="147.4" width="7.3" height="4.7" rx="1.5" fill="#fff" stroke="#6a78c8" stroke-width="0.7"/><rect x="198.4" y="149.3" width="3.5" height="1.1" fill="#888"/>
<polygon points="230.6,177.3 234.2,177.3 231.0,180.1" fill="#6a78c8"/><rect x="229.5" y="172.8" width="7.3" height="4.7" rx="1.5" fill="#fff" stroke="#6a78c8" stroke-width="0.7"/><rect x="231.4" y="174.6" width="3.5" height="1.1" fill="#888"/>
<polygon points="238.4,176.3 242.0,176.3 238.8,179.1" fill="#6fcbdc"/><rect x="237.3" y="171.8" width="7.3" height="4.7" rx="1.5" fill="#fff" stroke="#6fcbdc" stroke-width="0.7"/><rect x="239.2" y="173.6" width="3.5" height="1.1" fill="#888"/>
<polygon points="256.3,196.0 259.9,196.0 256.7,198.8" fill="#6fcbdc"/><rect x="255.2" y="191.4" width="7.3" height="4.7" rx="1.5" fill="#fff" stroke="#6fcbdc" stroke-width="0.7"/><rect x="257.1" y="193.3" width="3.5" height="1.1" fill="#888"/>
<polygon points="322.9,182.5 326.5,182.5 323.3,185.3" fill="#6fcbdc"/><rect x="321.9" y="177.9" width="7.3" height="4.7" rx="1.5" fill="#fff" stroke="#6fcbdc" stroke-width="0.7"/><rect x="323.7" y="179.8" width="3.5" height="1.1" fill="#888"/>
<polygon points="226.6,205.3 230.2,205.3 227.0,208.1" fill="#6a78c8"/><rect x="225.5" y="200.8" width="7.3" height="4.7" rx="1.5" fill="#fff" stroke="#6a78c8" stroke-width="0.7"/><rect x="227.4" y="202.6" width="3.5" height="1.1" fill="#888"/>
<polygon points="137.6,125.3 141.2,125.3 138.0,128.1" fill="#6fcbdc"/><rect x="136.5" y="120.8" width="7.3" height="4.7" rx="1.5" fill="#fff" stroke="#6fcbdc" stroke-width="0.7"/><rect x="138.4" y="122.6" width="3.5" height="1.1" fill="#888"/>
<polygon points="91.4,303.3 96.9,303.3 91.9,306.9" fill="#45bcd2"/><rect x="89.6" y="296.9" width="11.5" height="6.4" rx="2.1" fill="#fff" stroke="#45bcd2" stroke-width="1.0"/><text x="95.4" y="301.5" class="mk" style="font-size:3.8px">26$</text>
<polygon points="154.5,204.8 160.0,204.8 155.0,208.4" fill="#45bcd2"/><rect x="152.8" y="198.4" width="11.5" height="6.4" rx="2.1" fill="#fff" stroke="#45bcd2" stroke-width="1.0"/><text x="158.5" y="203.0" class="mk" style="font-size:3.8px">38$</text>
<polygon points="129.9,226.3 135.4,226.3 130.4,229.9" fill="#45bcd2"/><rect x="128.2" y="219.9" width="11.5" height="6.4" rx="2.1" fill="#fff" stroke="#45bcd2" stroke-width="1.0"/><text x="133.9" y="224.5" class="mk" style="font-size:3.8px">34$</text>
<polygon points="287.9,193.1 293.4,193.1 288.4,196.7" fill="#45bcd2"/><rect x="286.2" y="186.7" width="11.5" height="6.4" rx="2.1" fill="#fff" stroke="#45bcd2" stroke-width="1.0"/><text x="291.9" y="191.3" class="mk" style="font-size:3.8px">80$</text>
<polygon points="200.9,193.3 206.4,193.3 201.4,196.9" fill="#45bcd2"/><rect x="199.2" y="186.9" width="11.5" height="6.4" rx="2.1" fill="#fff" stroke="#45bcd2" stroke-width="1.0"/><text x="204.9" y="191.5" class="mk" style="font-size:3.8px">36$</text>
<polygon points="179.4,320.0 184.9,320.0 179.9,323.6" fill="#5262bd"/><rect x="177.7" y="313.6" width="11.5" height="6.4" rx="2.1" fill="#fff" stroke="#5262bd" stroke-width="1.0"/><text x="183.4" y="318.2" class="mk" style="font-size:3.8px">29$</text>
<polygon points="159.5,188.9 165.0,188.9 160.0,192.5" fill="#5262bd"/><rect x="157.8" y="182.5" width="11.5" height="6.4" rx="2.1" fill="#fff" stroke="#5262bd" stroke-width="1.0"/><text x="163.5" y="187.1" class="mk" style="font-size:3.8px">81$</text>
<polygon points="232.9,235.9 238.4,235.9 233.4,239.5" fill="#5262bd"/><rect x="231.2" y="229.5" width="11.5" height="6.4" rx="2.1" fill="#fff" stroke="#5262bd" stroke-width="1.0"/><text x="236.9" y="234.1" class="mk" style="font-size:3.8px">30$</text>
<polygon points="218.7,105.2 226.7,105.2 219.5,110.7" fill="#3f4fb3"/><rect x="216.4" y="94.6" width="16.2" height="10.2" rx="3.4" fill="#fff" stroke="#3f4fb3" stroke-width="1.8"/><text x="224.5" y="101.9" class="mk" style="font-size:6px">27$</text>
<polygon points="201.2,248.5 209.2,248.5 202.0,254.0" fill="#2fb5cd"/><rect x="198.9" y="237.9" width="16.2" height="10.2" rx="3.4" fill="#fff" stroke="#2fb5cd" stroke-width="1.8"/><text x="207.0" y="245.2" class="mk" style="font-size:6px">26$</text>
<polygon points="186.0,255.5 194.0,255.5 186.8,261.0" fill="#2fb5cd"/><rect x="183.7" y="244.9" width="16.2" height="10.2" rx="3.4" fill="#fff" stroke="#2fb5cd" stroke-width="1.8"/><text x="191.8" y="252.2" class="mk" style="font-size:6px">28$</text>
<polygon points="239.2,241.5 247.2,241.5 240.0,247.0" fill="#2fb5cd"/><rect x="236.9" y="230.9" width="16.2" height="10.2" rx="3.4" fill="#fff" stroke="#2fb5cd" stroke-width="1.8"/><text x="245.0" y="238.2" class="mk" style="font-size:6px">20$</text>
<polygon points="267.2,247.5 275.2,247.5 268.0,253.0" fill="#3f4fb3"/><rect x="264.9" y="236.9" width="16.2" height="10.2" rx="3.4" fill="#fff" stroke="#3f4fb3" stroke-width="1.8"/><text x="273.0" y="244.2" class="mk" style="font-size:6px">23$</text>
<polygon points="166.2,272.1 174.2,272.1 167.0,277.6" fill="#3f4fb3"/><rect x="163.9" y="261.5" width="16.2" height="10.2" rx="3.4" fill="#fff" stroke="#3f4fb3" stroke-width="1.8"/><text x="172.0" y="268.8" class="mk" style="font-size:6px">21$</text>
<polygon points="194.2,279.1 202.2,279.1 195.0,284.6" fill="#2fb5cd"/><rect x="191.9" y="268.5" width="16.2" height="10.2" rx="3.4" fill="#fff" stroke="#2fb5cd" stroke-width="1.8"/><text x="200.0" y="275.8" class="mk" style="font-size:6px">24$</text>
<polygon points="249.2,270.9 257.2,270.9 250.0,276.4" fill="#2fb5cd"/><rect x="246.9" y="260.3" width="16.2" height="10.2" rx="3.4" fill="#fff" stroke="#2fb5cd" stroke-width="1.8"/><text x="255.0" y="267.6" class="mk" style="font-size:6px">22$</text>
<polygon points="221.2,364.5 229.2,364.5 222.0,370.0" fill="#3f4fb3"/><rect x="218.9" y="353.9" width="16.2" height="10.2" rx="3.4" fill="#fff" stroke="#3f4fb3" stroke-width="1.8"/><text x="227.0" y="361.2" class="mk" style="font-size:6px">25$</text>
</svg>
<div class="dlg"><div class="dg1">Google</div><div class="dg2">This page can't load Google Maps correctly.</div><div class="dg3">Do you own this website?</div><div class="ok">OK</div></div>
<div class="fs"><svg width="18" height="18" viewBox="0 0 18 18"><path d="M5.6 7.8V5.2h2.4M10 5.2h2.4v2.6M12.4 10.2v2.6H10M8 12.8H5.6v-2.6" fill="none" stroke="#6a6a6a" stroke-width="1.1"/></svg></div>
<div class="glogo">Google</div>
<div class="attr" style="left:311px;width:43px">Keyboard shortcuts</div>
<div class="attr" style="left:355px;width:54px">Map data ©2025 Google</div>
<div class="attr" style="left:410px;width:17px">Terms</div>
<div class="cam"><svg width="18" height="18" viewBox="0 0 18 18"><path d="M7.6 5.4L9 4.2l1.4 1.2M7.6 12.2L9 13.4l1.4-1.2M5.3 7.6L4.2 9l1.1 1.4M12.7 7.6L13.8 9l-1.1 1.4" fill="none" stroke="#555" stroke-width="1.1"/></svg></div>
</div>
<div class="pnl">
<div class="fh">BEST FILTERS EVER (empty)</div>
<div class="ln" style="top:18px"></div>
<div class="ln" style="top:31px"></div>
<div class="ln" style="top:44px"></div>
<div class="ph" style="top:46px">Label</div>
<div class="ln" style="top:57px"></div>
<div class="ph" style="top:62px">Input Filters</div>
<div class="sb"></div>
<div class="row g" style="top:74.3px"><div class="badge bc">20$</div><div class="ttl">THOMPSON AND DAUGHTERS</div><div class="adr">5164 Jacobs Rest</div><div class="img"><svg class="bi1" width="9" height="9" viewBox="0 0 8 8"><path d="M0.5 7.5V0.5h4.5l2.5 2.5" fill="none" stroke="#9a9a9a" stroke-width="0.8"/><path d="M0.8 7.2L3 4.5L5 5.5L3.5 7.2z" fill="#2f7a5a"/><path d="M2 4.2L4 3L5.5 4.8L3 5.2z" fill="#a8d8c0"/><path d="M5.5 6.5L7.2 5.2V7.2H5.5z" fill="#555"/></svg></div></div>
<div class="row w" style="top:121.43px"><div class="badge bi">21$</div><div class="ttl">MOORE, STEUBER AND KUVALIS</div><div class="adr">90508 Madaline Alley</div><div class="img"><svg class="bi1" width="9" height="9" viewBox="0 0 8 8"><path d="M0.5 7.5V0.5h4.5l2.5 2.5" fill="none" stroke="#9a9a9a" stroke-width="0.8"/><path d="M0.8 7.2L3 4.5L5 5.5L3.5 7.2z" fill="#2f7a5a"/><path d="M2 4.2L4 3L5.5 4.8L3 5.2z" fill="#a8d8c0"/><path d="M5.5 6.5L7.2 5.2V7.2H5.5z" fill="#555"/></svg></div></div>
<div class="row g" style="top:168.55px"><div class="badge bc">22$</div><div class="ttl">KUNDE-BAYER</div><div class="adr">662 Jakayla Manors</div><div class="img"><svg class="bi1" width="9" height="9" viewBox="0 0 8 8"><path d="M0.5 7.5V0.5h4.5l2.5 2.5" fill="none" stroke="#9a9a9a" stroke-width="0.8"/><path d="M0.8 7.2L3 4.5L5 5.5L3.5 7.2z" fill="#2f7a5a"/><path d="M2 4.2L4 3L5.5 4.8L3 5.2z" fill="#a8d8c0"/><path d="M5.5 6.5L7.2 5.2V7.2H5.5z" fill="#555"/></svg></div></div>
<div class="row w" style="top:215.68px"><div class="badge bi">23$</div><div class="ttl">RATKE, HEGMANN AND HARRIS</div><div class="adr">75510 Ratke Tunnel</div><div class="img"><svg class="bi1" width="9" height="9" viewBox="0 0 8 8"><path d="M0.5 7.5V0.5h4.5l2.5 2.5" fill="none" stroke="#9a9a9a" stroke-width="0.8"/><path d="M0.8 7.2L3 4.5L5 5.5L3.5 7.2z" fill="#2f7a5a"/><path d="M2 4.2L4 3L5.5 4.8L3 5.2z" fill="#a8d8c0"/><path d="M5.5 6.5L7.2 5.2V7.2H5.5z" fill="#555"/></svg></div></div>
<div class="row g" style="top:262.8px"><div class="badge bc">24$</div><div class="ttl">FAHEY, KUHN AND BEER</div><div class="adr">3253 Gislason Terrace</div><div class="img"><svg class="bi1" width="9" height="9" viewBox="0 0 8 8"><path d="M0.5 7.5V0.5h4.5l2.5 2.5" fill="none" stroke="#9a9a9a" stroke-width="0.8"/><path d="M0.8 7.2L3 4.5L5 5.5L3.5 7.2z" fill="#2f7a5a"/><path d="M2 4.2L4 3L5.5 4.8L3 5.2z" fill="#a8d8c0"/><path d="M5.5 6.5L7.2 5.2V7.2H5.5z" fill="#555"/></svg></div></div>
<div class="row w" style="top:309.93px"><div class="badge bi">25$</div><div class="ttl">CASSIN, KEMMER AND CARTER</div><div class="adr">2152 Sebastian Manors</div><div class="img"><svg class="bi1" width="9" height="9" viewBox="0 0 8 8"><path d="M0.5 7.5V0.5h4.5l2.5 2.5" fill="none" stroke="#9a9a9a" stroke-width="0.8"/><path d="M0.8 7.2L3 4.5L5 5.5L3.5 7.2z" fill="#2f7a5a"/><path d="M2 4.2L4 3L5.5 4.8L3 5.2z" fill="#a8d8c0"/><path d="M5.5 6.5L7.2 5.2V7.2H5.5z" fill="#555"/></svg></div></div>
<div class="row g" style="top:357.05px"><div class="badge bc">26$</div><div class="ttl">KERLUKE-BARROWS</div><div class="adr">7456 Jerde Unions</div><div class="img"><svg class="bi1" width="9" height="9" viewBox="0 0 8 8"><path d="M0.5 7.5V0.5h4.5l2.5 2.5" fill="none" stroke="#9a9a9a" stroke-width="0.8"/><path d="M0.8 7.2L3 4.5L5 5.5L3.5 7.2z" fill="#2f7a5a"/><path d="M2 4.2L4 3L5.5 4.8L3 5.2z" fill="#a8d8c0"/><path d="M5.5 6.5L7.2 5.2V7.2H5.5z" fill="#555"/></svg></div></div>
<div class="row w" style="top:404.18px"><div class="badge bi">27$</div><div class="ttl">HOPPE-TERRY</div><div class="adr">94898 Ellis Rest</div><div class="img"><svg class="bi1" width="9" height="9" viewBox="0 0 8 8"><path d="M0.5 7.5V0.5h4.5l2.5 2.5" fill="none" stroke="#9a9a9a" stroke-width="0.8"/><path d="M0.8 7.2L3 4.5L5 5.5L3.5 7.2z" fill="#2f7a5a"/><path d="M2 4.2L4 3L5.5 4.8L3 5.2z" fill="#a8d8c0"/><path d="M5.5 6.5L7.2 5.2V7.2H5.5z" fill="#555"/></svg></div></div>
<div class="row g" style="top:451.3px"><div class="badge bc">28$</div><div class="ttl">SCHUPPE, DURGAN AND KEELING</div><div class="adr">05514 Okuneva Stravenue</div><div class="img"><svg class="bi1" width="9" height="9" viewBox="0 0 8 8"><path d="M0.5 7.5V0.5h4.5l2.5 2.5" fill="none" stroke="#9a9a9a" stroke-width="0.8"/><path d="M0.8 7.2L3 4.5L5 5.5L3.5 7.2z" fill="#2f7a5a"/><path d="M2 4.2L4 3L5.5 4.8L3 5.2z" fill="#a8d8c0"/><path d="M5.5 6.5L7.2 5.2V7.2H5.5z" fill="#555"/></svg></div></div>
</div>
<div class="ftl">@ IVAN STARKOV</div>
<div class="ftr">GOOGLE-MAP-REACT README</div>
</body></html>
